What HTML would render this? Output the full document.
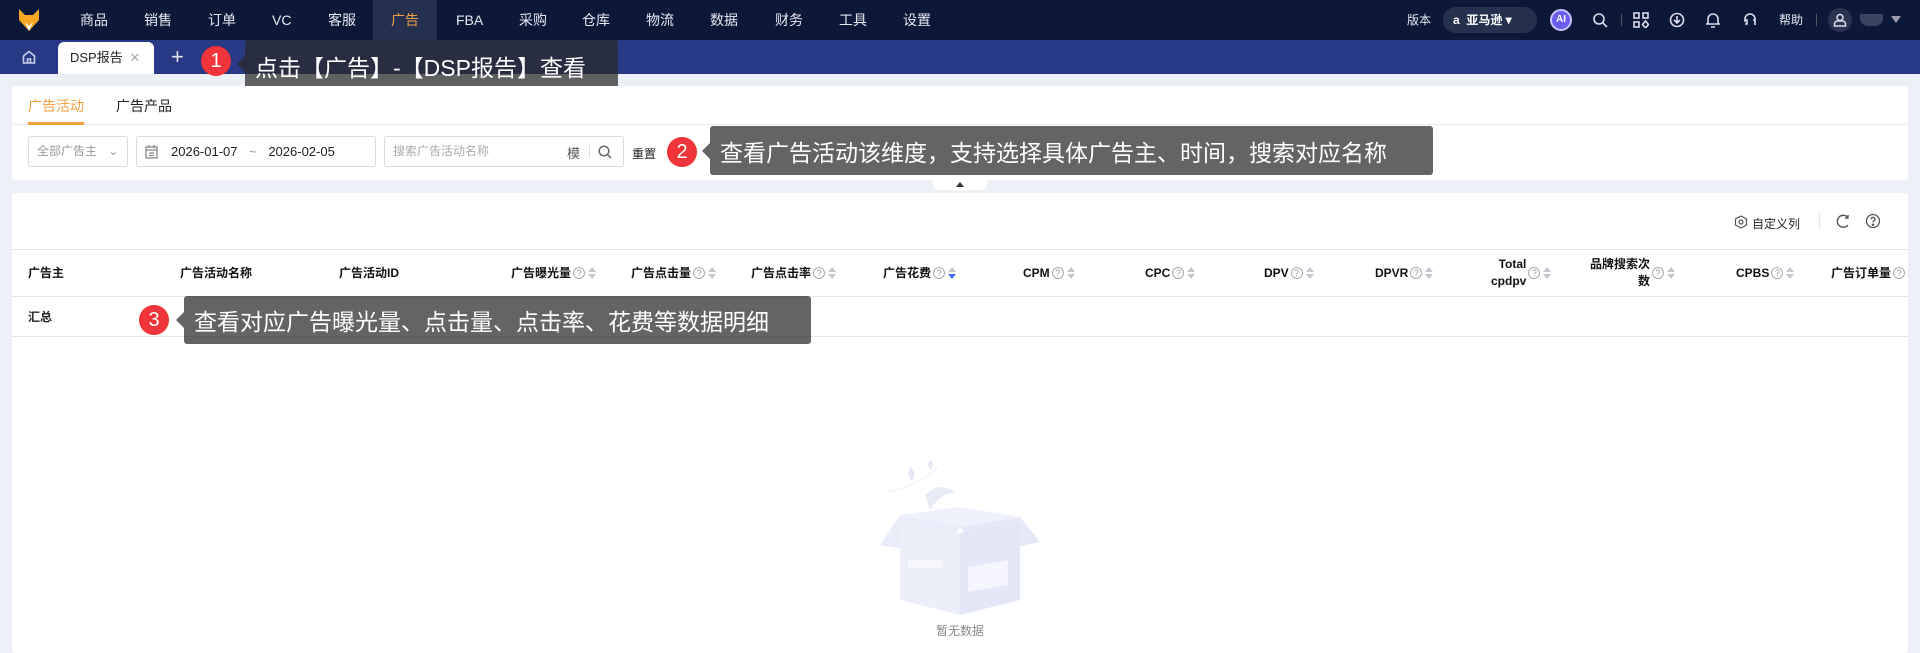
<!DOCTYPE html>
<html><head><meta charset="utf-8"><style>
*{margin:0;padding:0;box-sizing:border-box}
body{width:1920px;height:639px;overflow:hidden;background:#eef0f8;font-family:"Liberation Sans","Noto Sans CJK SC",sans-serif;font-size:13px;color:#222;position:relative}
.abs{position:absolute}
.nav{left:0;top:0;width:1920px;height:40px;background:#0c1838}
.nav .it{position:absolute;top:0;height:40px;line-height:40px;color:#e6e9f2;font-size:14px}
.tabbar{left:0;top:40px;width:1920px;height:34px;background:#283a85}
.card{background:#fff;border-radius:4px}
.th{position:absolute;top:249px;height:47px;display:flex;align-items:center;font-weight:bold;font-size:12px;color:#111}
.q{display:inline-block;width:12px;height:12px;border:1px solid #aaa;border-radius:50%;font-size:9px;line-height:10px;text-align:center;color:#999;font-weight:normal;margin-left:2px}
.s{display:inline-block;width:8px;height:14px;margin-left:3px;position:relative}
.s:before{content:"";position:absolute;left:0;top:1px;border:4px solid transparent;border-bottom:5px solid #c4c7cf;border-top:0}
.s:after{content:"";position:absolute;left:0;top:8px;border:4px solid transparent;border-top:5px solid #c4c7cf;border-bottom:0}
.s.b:after{border-top-color:#3a6ff0}
.tip{position:absolute;background:rgba(40,40,40,0.72);color:#fff;font-size:23px;border-radius:3px;padding-left:10px;display:flex;align-items:center}
.tip:before{content:"";position:absolute;left:-8px;top:50%;margin-top:-8px;border:8px solid transparent;border-right-color:rgba(40,40,40,0.72);border-left:0}
.badge{position:absolute;width:30px;height:30px;border-radius:50%;background:#f0353a;color:#fff;font-size:20px;text-align:center;line-height:30px}
.ic{position:absolute;top:12px}
</style></head><body>
<div class="abs nav">
<svg class="abs" style="left:18px;top:8px" width="22" height="24" viewBox="0 0 22 24"><path d="M1 1 L7 7 L15 7 L21 1 L21 12 L11 23 L1 12 Z" fill="#f5a623"/><path d="M7 14 L11 18 L15 14 L11 23Z" fill="#fff"/></svg>
<div class="it" style="left:80px">商品</div><div class="it" style="left:144px">销售</div><div class="it" style="left:208px">订单</div><div class="it" style="left:272px">VC</div><div class="it" style="left:328px">客服</div>
<div class="abs" style="left:373px;top:0;width:64px;height:40px;background:#253050"></div>
<div class="it" style="left:391px;color:#f5a040">广告</div><div class="it" style="left:456px">FBA</div><div class="it" style="left:519px">采购</div><div class="it" style="left:582px">仓库</div><div class="it" style="left:646px">物流</div><div class="it" style="left:710px">数据</div><div class="it" style="left:775px">财务</div><div class="it" style="left:839px">工具</div><div class="it" style="left:903px">设置</div>
<div class="it" style="left:1407px;font-size:12px">版本</div>
<div class="abs" style="left:1443px;top:7px;width:94px;height:26px;border-radius:13px;background:#26314f;color:#fff;font-size:12px;line-height:26px;padding-left:10px;font-weight:bold">a&nbsp; 亚马逊 ▾</div>
<div class="abs" style="left:1550px;top:9px;width:22px;height:22px;border-radius:50%;background:#6a5cf0;border:2px solid #c9c4ff;color:#fff;font-size:10px;font-weight:bold;text-align:center;line-height:18px">AI</div>
<svg class="ic" style="left:1592px" width="16" height="16" fill="none" stroke="#dde" stroke-width="1.6"><circle cx="7" cy="7" r="5"/><path d="M11 11l4 4"/></svg>
<div class="abs" style="left:1621px;top:14px;width:1px;height:12px;background:#556"></div>
<svg class="ic" style="left:1633px" width="16" height="16" fill="none" stroke="#dde" stroke-width="1.6"><rect x="1" y="1" width="5" height="5"/><rect x="10" y="1" width="5" height="5"/><rect x="1" y="10" width="5" height="5"/><path d="M12.5 9l3 3.5-3 3.5-3-3.5z"/></svg>
<svg class="ic" style="left:1669px" width="16" height="16" fill="none" stroke="#dde" stroke-width="1.6"><circle cx="8" cy="8" r="6.5"/><path d="M8 4v7M5 8l3 3 3-3"/></svg>
<svg class="ic" style="left:1705px" width="16" height="16" fill="none" stroke="#dde" stroke-width="1.6"><path d="M3 12V7a5 5 0 0110 0v5zM1 12h14M6 15h4"/></svg>
<svg class="ic" style="left:1742px" width="16" height="16" fill="none" stroke="#dde" stroke-width="1.6"><path d="M3 10V7a5 5 0 0110 0v6M3 8h2v4H3M11 8h2v4"/></svg>
<div class="it" style="left:1779px;font-size:12px">帮助</div>
<div class="abs" style="left:1816px;top:14px;width:1px;height:12px;background:#556"></div>
<div class="abs" style="left:1828px;top:8px;width:24px;height:24px;border-radius:50%;background:#2a3350"></div>
<svg class="abs" style="left:1833px;top:13px" width="14" height="14" fill="none" stroke="#dde" stroke-width="1.5"><circle cx="7" cy="4.5" r="3"/><path d="M1.5 13h11v-2a3 3 0 00-3-3h-5a3 3 0 00-3 3z"/></svg>
<div class="abs" style="left:1860px;top:14px;width:23px;height:12px;border-radius:0 0 8px 8px;background:#3a4460"></div>
<div class="abs" style="left:1891px;top:16px;border:5px solid transparent;border-top:7px solid #99a;border-bottom:0"></div>
</div>
<div class="abs tabbar">
<svg class="abs" style="left:22px;top:10px" width="14" height="14" fill="none" stroke="#c8cfe8" stroke-width="1.6"><path d="M1.5 13V6L7 1.5 12.5 6V13zM5.5 13V9h3v4"/></svg>
<div class="abs" style="left:58px;top:2px;width:96px;height:32px;background:#fff;border-radius:6px 6px 0 0;font-size:13px;line-height:32px;padding-left:12px">DSP报告 <span style="color:#aaa;margin-left:3px">✕</span></div>
<div class="abs" style="left:171px;top:2px;color:#e0e4f0;font-size:22px;line-height:30px">+</div>
</div>
<div class="badge" style="left:201px;top:46px">1</div>
<div class="tip" style="left:245px;top:40px;width:373px;height:48px;padding-top:4px">点击【广告】-【DSP报告】查看</div>

<div class="abs card" style="left:12px;top:86px;width:1896px;height:94px"></div>
<div class="abs" style="left:28px;top:96px;font-size:14px;color:#f5a040">广告活动</div>
<div class="abs" style="left:116px;top:96px;font-size:14px">广告产品</div>
<div class="abs" style="left:12px;top:124px;width:1896px;height:1px;background:#e8e8ee"></div>
<div class="abs" style="left:28px;top:122px;width:56px;height:3px;background:#f5a040"></div>
<div class="abs" style="left:28px;top:136px;width:100px;height:31px;border:1px solid #d9dbe2;border-radius:3px;color:#999;font-size:12px;line-height:29px;padding-left:8px">全部广告主 <span style="margin-left:8px">⌄</span></div>
<div class="abs" style="left:136px;top:136px;width:240px;height:31px;border:1px solid #d9dbe2;border-radius:3px;font-size:13px;line-height:29px;padding-left:34px">2026-01-07 <span style="color:#999;margin:0 8px">~</span> 2026-02-05</div>
<svg class="abs" style="left:145px;top:145px" width="13" height="14" fill="none" stroke="#888" stroke-width="1.3"><rect x="1" y="2" width="11" height="11"/><path d="M4 0v3M9 0v3M1 5h11M4 8h5M4 10.5h5"/></svg>
<div class="abs" style="left:384px;top:136px;width:240px;height:31px;border:1px solid #d9dbe2;border-radius:3px;color:#aaa;font-size:12px;line-height:29px;padding-left:8px">搜索广告活动名称</div>
<div class="abs" style="left:567px;top:143px;font-size:13px;color:#555">模</div>
<div class="abs" style="left:589px;top:145px;width:1px;height:13px;background:#ddd"></div>
<svg class="abs" style="left:598px;top:145px" width="14" height="14" fill="none" stroke="#666" stroke-width="1.5"><circle cx="6" cy="6" r="4.8"/><path d="M9.5 9.5l3.5 3.5"/></svg>
<div class="abs" style="left:632px;top:145px;font-size:12px">重置</div>
<div class="badge" style="left:667px;top:137px">2</div>
<div class="tip" style="left:710px;top:126px;width:723px;height:49px">查看广告活动该维度，支持选择具体广告主、时间，搜索对应名称</div>
<div class="abs" style="left:933px;top:180px;width:54px;height:10px;background:#fff;border-radius:0 0 6px 6px"></div>
<div class="abs" style="left:956px;top:182px;border:4px solid transparent;border-bottom:5px solid #333;border-top:0"></div>

<div class="abs card" style="left:12px;top:193px;width:1896px;height:460px"></div>
<svg class="abs" style="left:1734px;top:215px" width="14" height="14" fill="none" stroke="#555" stroke-width="1.2"><path d="M7 1l5.5 3v6L7 13 1.5 10V4z"/><circle cx="7" cy="7" r="2"/></svg>
<div class="abs" style="left:1752px;top:215px;font-size:12px">自定义列</div>
<div class="abs" style="left:1819px;top:212px;width:1px;height:18px;background:#e3e3e8"></div>
<svg class="abs" style="left:1836px;top:214px" width="14" height="15" fill="none" stroke="#555" stroke-width="1.4"><path d="M12 3.5A6 6 0 1012 11"/><path d="M12 1v3h-3"/></svg>
<svg class="abs" style="left:1865px;top:213px" width="16" height="16" fill="none" stroke="#555" stroke-width="1.3"><circle cx="8" cy="8" r="6.5"/><path d="M6 6.3a2 2 0 114 0c0 1.3-2 1.5-2 3"/><circle cx="8" cy="11.8" r=".6" fill="#555"/></svg>
<div class="abs" style="left:12px;top:249px;width:1896px;height:1px;background:#e6e7ec"></div>
<div class="abs" style="left:12px;top:296px;width:1896px;height:1px;background:#e6e7ec"></div>
<div class="abs" style="left:12px;top:336px;width:1896px;height:1px;background:#e6e7ec"></div>
<div class="th" style="left:28px">广告主</div>
<div class="th" style="left:180px">广告活动名称</div>
<div class="th" style="left:339px">广告活动ID</div>
<div class="th" style="left:511px">广告曝光量<span class="q">?</span><span class="s"></span></div>
<div class="th" style="left:631px">广告点击量<span class="q">?</span><span class="s"></span></div>
<div class="th" style="left:751px">广告点击率<span class="q">?</span><span class="s"></span></div>
<div class="th" style="left:883px">广告花费<span class="q">?</span><span class="s b"></span></div>
<div class="th" style="left:1023px">CPM<span class="q">?</span><span class="s"></span></div>
<div class="th" style="left:1145px">CPC<span class="q">?</span><span class="s"></span></div>
<div class="th" style="left:1264px">DPV<span class="q">?</span><span class="s"></span></div>
<div class="th" style="left:1375px">DPVR<span class="q">?</span><span class="s"></span></div>
<div class="th" style="left:1491px"><span style="text-align:right;line-height:17px">Total<br>cpdpv</span><span class="q">?</span><span class="s"></span></div>
<div class="th" style="left:1590px"><span style="text-align:right;line-height:17px">品牌搜索次<br>数</span><span class="q">?</span><span class="s"></span></div>
<div class="th" style="left:1736px">CPBS<span class="q">?</span><span class="s"></span></div>
<div class="th" style="left:1831px">广告订单量<span class="q">?</span></div>
<div class="abs" style="left:28px;top:308px;font-size:12px;font-weight:bold">汇总</div>
<div class="badge" style="left:139px;top:305px">3</div>
<div class="tip" style="left:184px;top:296px;width:627px;height:48px">查看对应广告曝光量、点击量、点击率、花费等数据明细</div>

<svg class="abs" style="left:880px;top:455px" width="160" height="160" viewBox="0 0 160 160">
<path d="M8 37 Q40 30 58 12" fill="none" stroke="#eef0f8" stroke-width="1"/>
<path d="M30 12q8 6 2 14q-6-6-2-14z M50 5q6 4 0 10q-4-5 0-10z" fill="#e6e9f5"/>
<path d="M45 40 Q60 25 75 38 Q60 38 50 55z" fill="#e8ebf6"/>
<path d="M20 60 L80 52 L140 62 L80 72 Z" fill="#eef0fb"/>
<path d="M0 90 L20 60 L80 72 L60 100Z" fill="#e9ecf9"/>
<path d="M80 72 L140 62 L160 87 L100 100Z" fill="#e4e8f7"/>
<path d="M20 65 L80 78 L80 160 L20 145Z" fill="#eceffa"/>
<path d="M80 78 L140 68 L140 145 L80 160Z" fill="#e2e6f6"/>
<rect x="28" y="105" width="35" height="8" fill="#f6f7fd"/>
<path d="M88 112 L128 105 L128 130 L88 137Z" fill="#f5f6fd"/>
</svg>
<div class="abs" style="left:936px;top:622px;font-size:12px;color:#888">暂无数据</div>
</body></html>
